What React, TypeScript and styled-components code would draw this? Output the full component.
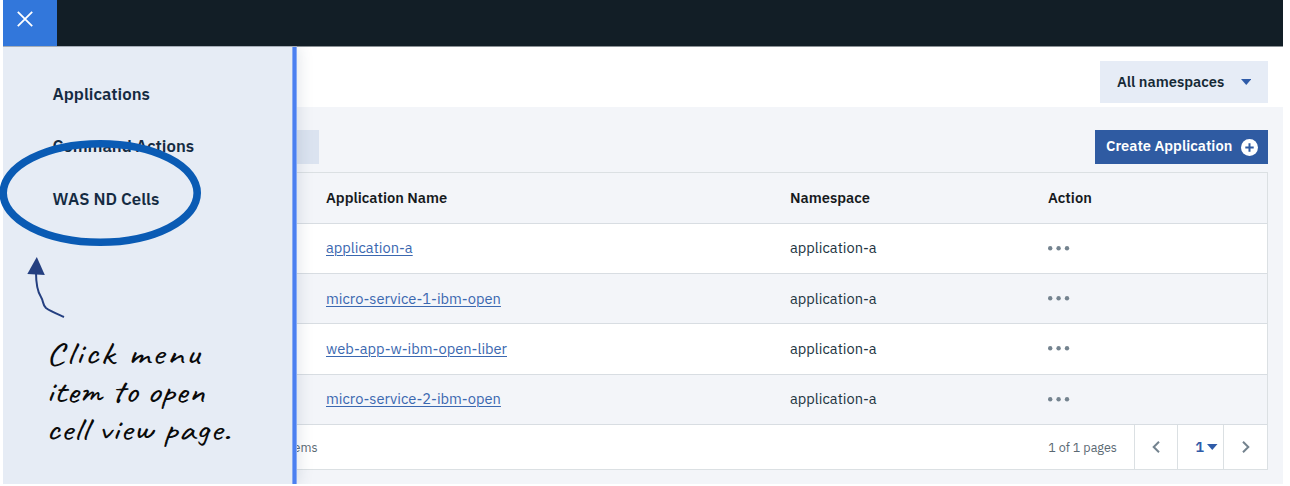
import React from "react";
import styled, { createGlobalStyle } from "styled-components";

const GlobalStyle = createGlobalStyle`
  * { box-sizing: border-box; }
  body { margin: 0; background: #fff; overflow: hidden; }
  button { font: inherit; border: 0; padding: 0; background: none; }
`;

const Screen = styled.div`
  position: relative;
  width: 1290px;
  height: 486px;
  padding: 0 7px 2px 3px;
  overflow: hidden;
  background: #fff;
  color: #152935;
  font-family: "IBM Plex Sans", Roboto, "Liberation Sans", sans-serif;
`;

const Page = styled.div`
  height: 484px;
  display: flex;
  flex-direction: column;
  background: #f3f5f9;
`;

const TopBar = styled.header`
  flex: none;
  height: 46px;
  display: flex;
  background: #121e26;
`;

const CloseButton = styled.button`
  width: 53.5px;
  height: 46px;
  padding: 0 9.5px 8px 0;
  display: flex;
  align-items: center;
  justify-content: center;
  background: #3277db;
`;

const TitleBar = styled.div`
  flex: none;
  height: 61px;
  padding: 15px 15px 0 0;
  display: flex;
  justify-content: flex-end;
  background: #fff;
  border-top: 1px solid #8b9195;
`;

const NamespaceSelect = styled.button`
  width: 168px;
  height: 42px;
  margin-top: -1px;
  padding: 0 17px 0 17px;
  display: flex;
  align-items: center;
  justify-content: space-between;
  background: #e6ecf6;
  color: #152935;
`;

const Label = styled.span<{ $size: number; $weight?: number; $color?: string }>`
  font-size: ${(p) => p.$size}px;
  font-weight: ${(p) => p.$weight ?? 600};
  color: ${(p) => p.$color ?? "inherit"};
  white-space: nowrap;
  line-height: 20px;
`;

const Content = styled.main`
  padding: 23px 15px 0;
`;

const Toolbar = styled.div`
  height: 34px;
  display: flex;
  justify-content: space-between;
`;

const SearchBox = styled.div`
  width: 301px;
  background: #dbe3f0;
`;

const CreateButton = styled.button`
  width: 173px;
  padding: 0 10px 2px 11px;
  display: flex;
  align-items: center;
  justify-content: space-between;
  background: #2f5ba2;
  color: #fff;

  svg { margin-top: 2px; }
`;

const Table = styled.div`
  margin-top: 8px;
  border: 1px solid #dbe0e3;
`;

const Row = styled.div<{ $tint?: boolean; $head?: boolean }>`
  height: ${(p) => (p.$head ? 50.7 : 50.3)}px;
  padding-left: 307px;
  display: grid;
  grid-template-columns: 464px 258px 1fr;
  align-items: center;
  background: ${(p) => (p.$tint ? "#f3f5f9" : "#fff")};
  border-bottom: 1px solid #d8dde2;
`;

const AppLink = styled.a`
  justify-self: start;
  font-size: 14.67px;
  line-height: 20px;
  color: #3b68b0;
  text-decoration: underline;
  text-decoration-thickness: 1px;
  text-underline-offset: 2px;
  white-space: nowrap;
`;

const Dots = styled.svg`
  display: block;
  fill: #74838f;
`;

const Footer = styled.div`
  height: 44px;
  padding-left: 267px;
  display: flex;
  align-items: stretch;
  background: #fff;
  color: #5a6872;
`;

const FooterText = styled.div<{ $end?: boolean }>`
  display: flex;
  align-items: center;
  margin-left: ${(p) => (p.$end ? "auto" : "0")};
  margin-right: ${(p) => (p.$end ? "17px" : "0")};
`;

const PagerCell = styled.button<{ $width: number; $inset?: number }>`
  width: ${(p) => p.$width}px;
  padding-left: ${(p) => p.$inset ?? 0}px;
  display: flex;
  align-items: center;
  justify-content: center;
  gap: 3px;
  border-left: 1px solid #dbe0e3;
`;

const Drawer = styled.nav`
  position: absolute;
  left: 3px;
  top: 46px;
  width: 294px;
  height: 438px;
  padding: 37px 0 0 49.5px;
  display: flex;
  flex-direction: column;
  background: #e6ecf5;
  border-top: 1px solid #a5adb7;
  box-shadow: 2px 0 14px rgba(40, 60, 90, 0.13);
  clip-path: inset(0 -20px 0 0);
`;

const DrawerEdge = styled.div`
  position: absolute;
  right: 0;
  top: 0;
  bottom: 0;
  width: 5px;
  background: linear-gradient(90deg, #a5bff3, #4c80f0 30%, #4c80f0 70%, #a5c0f8);
`;

const MenuItem = styled.a`
  height: 52.4px;
  font-size: 16.77px;
  line-height: 20px;
  font-weight: 600;
  color: #152b42;
  white-space: nowrap;
`;

const Annotation = styled.svg`
  position: absolute;
  left: 0;
  top: 0;
`;

const Note = styled.div`
  position: absolute;
  left: 46px;
  top: 335px;
  color: #0a0a0a;
  font-family: "Bradley Hand ITC", "Bradley Hand", Caveat, Lato, cursive;
  font-size: 32px;
  font-weight: 400;
  line-height: 38px;
  white-space: nowrap;
  transform: scaleX(1.2);
  transform-origin: left top;
`;

const NoteLine = styled.div<{ $spacing: number }>`
  letter-spacing: ${(p) => p.$spacing}px;
`;

const apps = [
  "application-a",
  "micro-service-1-ibm-open",
  "web-app-w-ibm-open-liber",
  "micro-service-2-ibm-open",
];

const Caret = ({ color }: { color: string }) => (
  <svg width="10.5" height="6" viewBox="0 0 11 6" preserveAspectRatio="none">
    <path d="M0 0H11L5.5 6Z" fill={color} />
  </svg>
);

const Chevron = ({ flip }: { flip?: boolean }) => (
  <svg width="8" height="12" viewBox="0 0 8 12" fill="none">
    <path d={flip ? "M1 0.8L6.3 6L1 11.2" : "M7 0.8L1.7 6L7 11.2"} stroke="#74838f" strokeWidth="2" />
  </svg>
);

export default function App() {
  return (
    <Screen>
      <GlobalStyle />
      <Page>
        <TopBar>
          <CloseButton aria-label="Close menu">
            <svg width="16" height="16" viewBox="0 0 16 16">
              <path d="M0.8 0.8L15.2 15.2M15.2 0.8L0.8 15.2" stroke="#fff" strokeWidth="1.8" />
            </svg>
          </CloseButton>
        </TopBar>
        <TitleBar>
          <NamespaceSelect>
            <Label $size={14.7}>All namespaces</Label>
            <Caret color="#2f5ba8" />
          </NamespaceSelect>
        </TitleBar>
        <Content>
          <Toolbar>
            <SearchBox />
            <CreateButton>
              <Label $size={14.67}>Create Application</Label>
              <svg width="17" height="17" viewBox="0 0 17 17">
                <circle cx="8.5" cy="8.5" r="8.5" fill="#fff" />
                <path d="M8.5 4.3V12.7M4.3 8.5H12.7" stroke="#2f5ba2" strokeWidth="2" />
              </svg>
            </CreateButton>
          </Toolbar>
          <Table>
            <Row $tint $head>
              <Label $size={14.67} $color="#161a1d">Application Name</Label>
              <Label $size={14.67} $color="#161a1d">Namespace</Label>
              <Label $size={14.67} $color="#161a1d">Action</Label>
            </Row>
            {apps.map((name, i) => (
              <Row key={name} $tint={i % 2 === 1}>
                <AppLink>{name}</AppLink>
                <Label $size={14.67} $weight={400} $color="#22343f">application-a</Label>
                <Dots width="22" height="5" viewBox="0 0 22 5">
                  <circle cx="2.2" cy="2.2" r="2.2" />
                  <circle cx="10.6" cy="2.2" r="2.2" />
                  <circle cx="19" cy="2.2" r="2.2" />
                </Dots>
              </Row>
            ))}
            <Footer>
              <FooterText><Label $size={12.6} $weight={400}>items</Label></FooterText>
              <FooterText $end><Label $size={12.6} $weight={400}>1 of 1 pages</Label></FooterText>
              <PagerCell $width={43}><Chevron /></PagerCell>
              <PagerCell $width={46} $inset={12}>
                <Label $size={14.67} $color="#2f5ba8">1</Label>
                <Caret color="#2f5ba8" />
              </PagerCell>
              <PagerCell $width={44}><Chevron flip /></PagerCell>
            </Footer>
          </Table>
        </Content>
      </Page>
      <Drawer>
        <MenuItem>Applications</MenuItem>
        <MenuItem>Command Actions</MenuItem>
        <MenuItem>WAS ND Cells</MenuItem>
        <DrawerEdge />
      </Drawer>
      <Annotation width="300" height="340" viewBox="0 0 300 340" fill="none">
        <ellipse cx="100.2" cy="193" rx="97" ry="49.2" stroke="#0a5bb4" strokeWidth="7.6" />
        <path d="M36 272C36 284 37 291 41 297C44 302 42 304 46 308C50 311 55 313 64 317" stroke="#243f80" strokeWidth="2" />
        <path d="M36.8 257L27.3 274L44.8 275Z" fill="#243f80" />
      </Annotation>
      <Note>
        <NoteLine $spacing={1.8}>Click menu</NoteLine>
        <NoteLine $spacing={0}>item to open</NoteLine>
        <NoteLine $spacing={0.5}>cell view page.</NoteLine>
      </Note>
    </Screen>
  );
}
